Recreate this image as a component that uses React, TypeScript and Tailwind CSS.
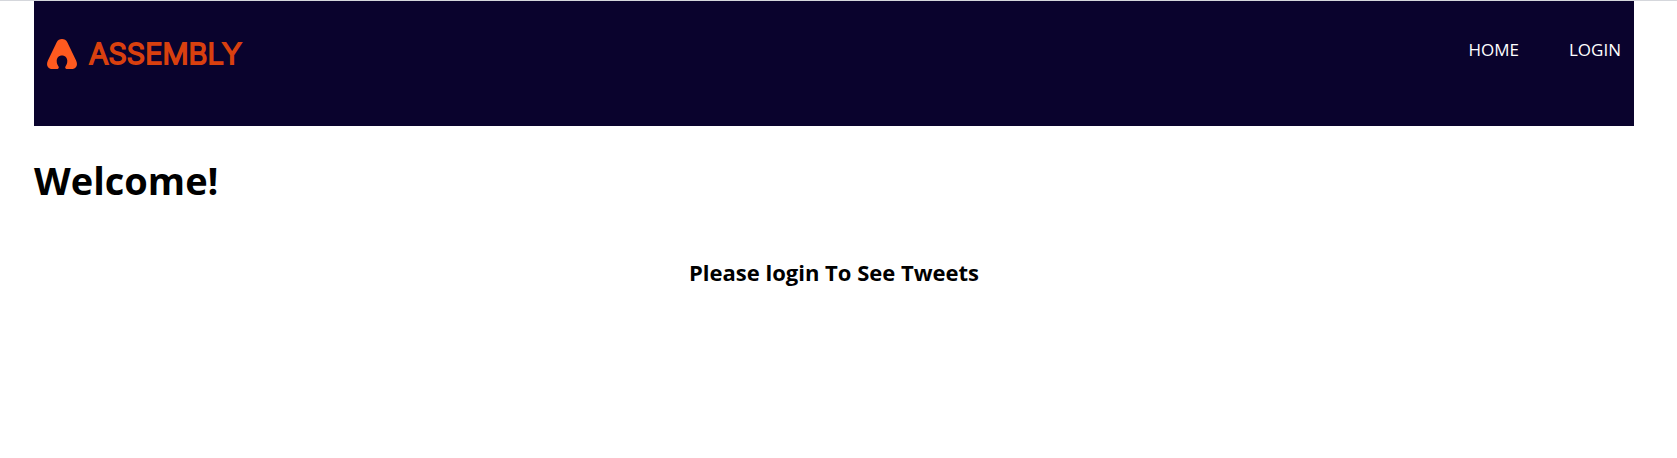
function Logo() {
  return (
    <a href="#home" aria-label="Assembly" className="flex items-center gap-3">
      <svg viewBox="0 0 30 30" className="h-[30px] w-[30px]" aria-hidden="true">
        <path
          fill="#ff5a1f"
          d="M15 0C17.3 0 19.2 1.1 20.3 3.2L29.2 21.8C31.2 26.2 29 30 25 30H20.2C18.3 30 17.7 28.7 18.6 27.2C19.7 25.6 20.3 24.3 20.3 21.8C20.3 18.5 18 16.4 15 16.4C12 16.4 9.7 18.5 9.7 21.8C9.7 24.3 10.3 25.6 11.4 27.2C12.3 28.7 11.7 30 9.8 30H5C1 30-1.2 26.2.8 21.8L9.7 3.2C10.8 1.1 12.7 0 15 0Z"
        />
      </svg>
      <span className="font-['Inter',sans-serif] text-[29px] leading-[30px] font-light text-[#d9400f] [-webkit-text-stroke:2px_#d9400f] [stroke-linejoin:round]">
        ASSEMBLY
      </span>
    </a>
  );
}

export default function App() {
  return (
    <div className="border-t border-[#d5d7dc] bg-white pr-[43px] pl-[34px] font-['Open_Sans','Noto_Sans',sans-serif] text-black">
      <header className="flex items-start justify-between bg-[#0a032d] px-[13px] pt-9 pb-14">
        <div className="pt-0.5 pb-px">
          <Logo />
        </div>
        <nav className="flex gap-[50px] text-[17px] leading-[26px] text-white">
          <a href="#home">HOME</a>
          <a href="#login">LOGIN</a>
        </nav>
      </header>
      <main>
        <h1 className="mt-7 text-[38px] leading-[52px] font-bold">Welcome!</h1>
        <h2 className="mt-[50px] text-center text-[22px] leading-8 font-bold">Please login To See Tweets</h2>
      </main>
    </div>
  );
}
